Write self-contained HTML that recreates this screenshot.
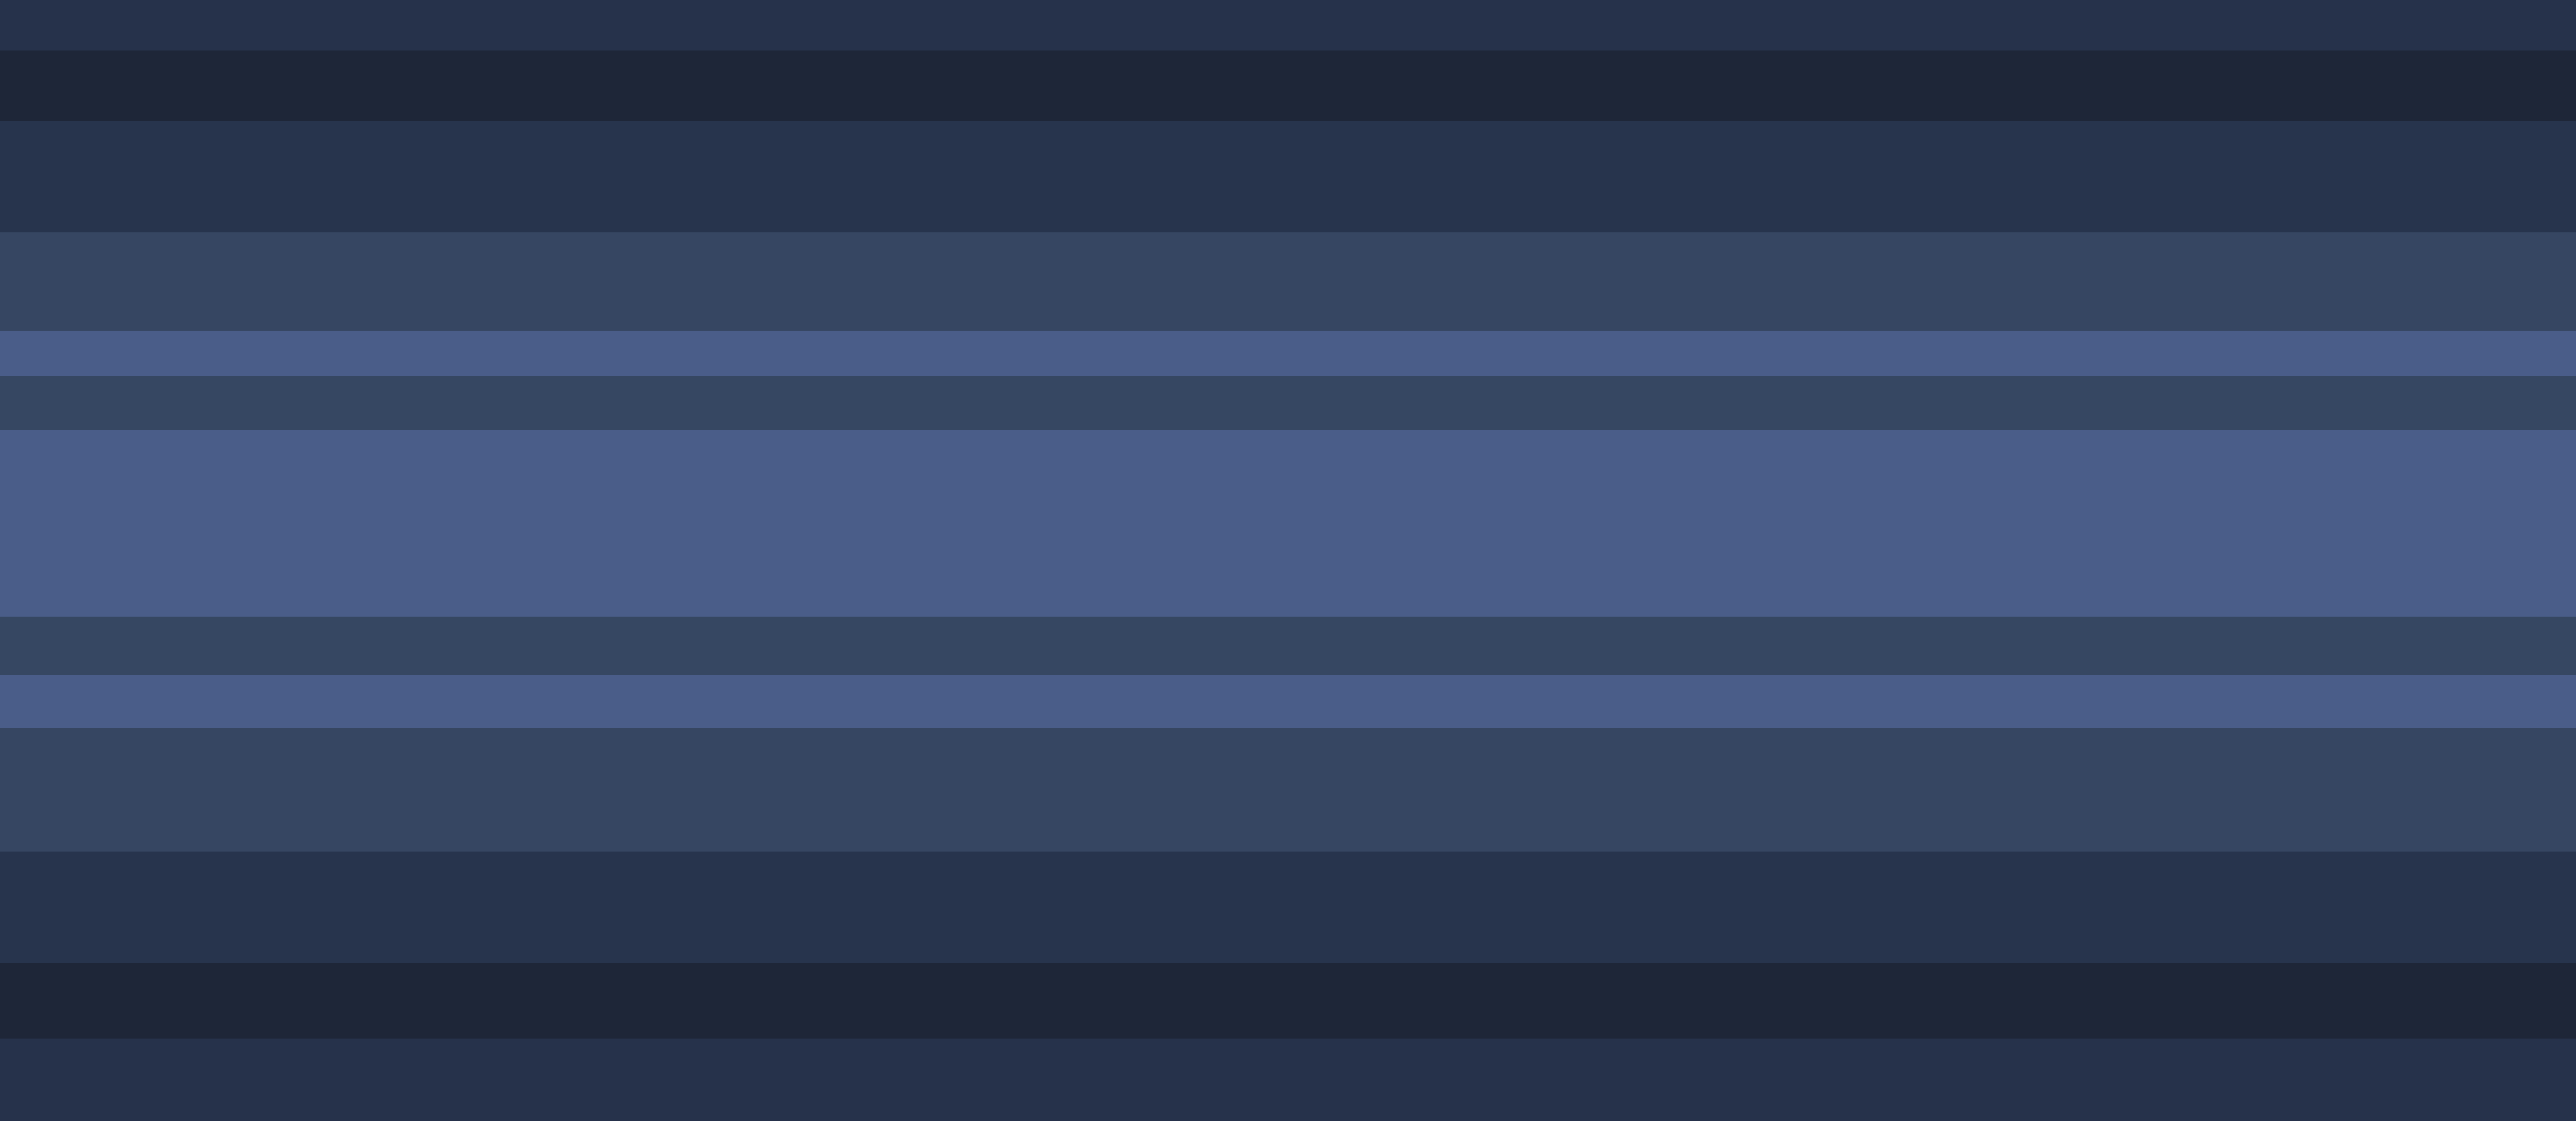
<!DOCTYPE html>
<html><head><meta charset="utf-8"><style>
html,body{margin:0;padding:0;width:5760px;height:2176px;overflow:hidden;background:#25324b}
div{position:absolute;left:0;width:5760px}
</style></head><body>
<div style="top:0;height:98px;background:#26324b"></div>
<div style="top:98px;height:137px;background:#1e2638"></div>
<div style="top:235px;height:216px;background:#27344d"></div>
<div style="top:451px;height:191px;background:#364662"></div>
<div style="top:642px;height:88px;background:#4a5d89"></div>
<div style="top:730px;height:105px;background:#364762"></div>
<div style="top:835px;height:362px;background:#4a5d89"></div>
<div style="top:1197px;height:113px;background:#364762"></div>
<div style="top:1310px;height:103px;background:#4a5d89"></div>
<div style="top:1413px;height:240px;background:#364662"></div>
<div style="top:1653px;height:216px;background:#27344d"></div>
<div style="top:1869px;height:147px;background:#1e2638"></div>
<div style="top:2016px;height:160px;background:#26324b"></div>
</body></html>
